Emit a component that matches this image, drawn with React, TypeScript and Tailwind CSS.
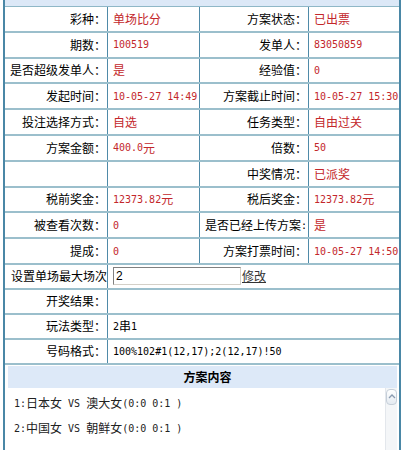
import React from "react";

type Row = [string, string, string, string];

const rows: Row[] = [
  ["彩种：", "单场比分", "方案状态：", "已出票"],
  ["期数：", "100519", "发单人：", "83050859"],
  ["是否超级发单人：", "是", "经验值：", "0"],
  ["发起时间：", "10-05-27 14:49", "方案截止时间：", "10-05-27 15:30"],
  ["投注选择方式：", "自选", "任务类型：", "自由过关"],
  ["方案金额：", "400.0元", "倍数：", "50"],
  ["", "", "中奖情况：", "已派奖"],
  ["税前奖金：", "12373.82元", "税后奖金：", "12373.82元"],
  ["被查看次数：", "0", "是否已经上传方案:", "是"],
  ["提成：", "0", "方案打票时间：", "10-05-27 14:50"],
];

// ascii runs get the narrow mono face, like the old SimSun half-width glyphs
function T({ s }: { s: string }) {
  const parts = s.split(/([\x20-\x7e]+)/).filter(Boolean);
  return (
    <>
      {parts.map((p, i) =>
        /^[\x20-\x7e]+$/.test(p) ? (
          <span key={i} className="font-['DejaVu_Sans_Mono',monospace] text-[10px] whitespace-pre">
            {p}
          </span>
        ) : (
          <span key={i}>{p}</span>
        )
      )}
    </>
  );
}

function Label({ s, w }: { s: string; w: string }) {
  return (
    <div className={`${w} flex shrink-0 items-center justify-end whitespace-nowrap border-r border-[#4f8aa8] pr-[1px]`}>
      <T s={s} />
    </div>
  );
}

export default function App() {
  return (
    <div className="min-h-[450px] bg-white font-['Noto_Sans_CJK_SC',sans-serif] text-[12px] text-black">
      <div className="ml-[3px] w-[398px] border-x-2 border-[#4a87a6]">
        {/* tail of the header above */}
        <div className="h-[7px] border-b border-[#8fb7c7] bg-[#dce8f7]" />

        {rows.map((r, i) => (
          <div key={i} className="flex h-[25.8px] border-b-2 border-[#9bbfcc]">
            <Label s={r[0]} w="w-[103px]" />
            <div className="flex w-[92px] shrink-0 items-center whitespace-nowrap border-r border-[#4f8aa8] pl-[5px] text-[#c3272b]">
              <T s={r[1]} />
            </div>
            <Label s={r[2]} w="w-[109px]" />
            <div className="flex flex-1 items-center whitespace-nowrap pl-[5px] text-[#c3272b]">
              <T s={r[3]} />
            </div>
          </div>
        ))}

        <div className="flex h-[25px] border-b-2 border-[#9bbfcc]">
          <div className="flex w-[103px] shrink-0 items-center justify-end whitespace-nowrap border-r border-[#4f8aa8]">
            设置单场最大场次
          </div>
          <div className="flex flex-1 items-center pl-[5px]">
            <input
              defaultValue="2"
              className="h-[18px] w-[128px] border border-t-[#808080] border-l-[#808080] border-r-[#d4d0c8] border-b-[#d4d0c8] bg-white px-[2px] font-['Liberation_Sans',sans-serif] text-[12px] outline-none"
            />
            <a className="ml-[1px] cursor-pointer text-[#333] underline">修改</a>
          </div>
        </div>

        {[
          ["开奖结果：", ""],
          ["玩法类型：", "2串1"],
          ["号码格式：", "100%102#1(12,17);2(12,17)!50"],
        ].map(([l, v]) => (
          <div key={l} className="flex h-[25px] border-b-2 border-[#9bbfcc]">
            <Label s={l} w="w-[103px]" />
            <div className="flex flex-1 items-center whitespace-nowrap pl-[5px]">
              <T s={v} />
            </div>
          </div>
        ))}

        {/* 方案内容 */}
        <div className="pl-[3px] pr-[2px] pt-[1px]">
          <div className="flex h-[22px] items-center justify-center bg-[#dde9f8] pl-[10px] font-bold">
            方案内容
          </div>
          <div className="flex h-[70px]">
            <div className="flex-1 pt-[3px] text-[#222]">
              <div className="flex h-[25px] items-center pl-[6px]">
                <T s="1:日本女 VS 澳大女(0:0 0:1 )" />
              </div>
              <div className="flex h-[25px] items-center pl-[6px]">
                <T s="2:中国女 VS 朝鲜女(0:0 0:1 )" />
              </div>
            </div>
            <div className="w-[12px] border-l border-[#e3e7ec] bg-[#f4f6f8]">
              <div className="mt-[1px] flex h-[16px] items-center justify-center rounded-sm border border-[#c6cfd9] bg-gradient-to-b from-white to-[#e4eaf1]">
                <svg width="8" height="5" viewBox="0 0 8 5">
                  <path d="M1 4 L4 1 L7 4" fill="none" stroke="#8a9bb0" strokeWidth="1.3" />
                </svg>
              </div>
            </div>
          </div>
        </div>
      </div>
    </div>
  );
}
